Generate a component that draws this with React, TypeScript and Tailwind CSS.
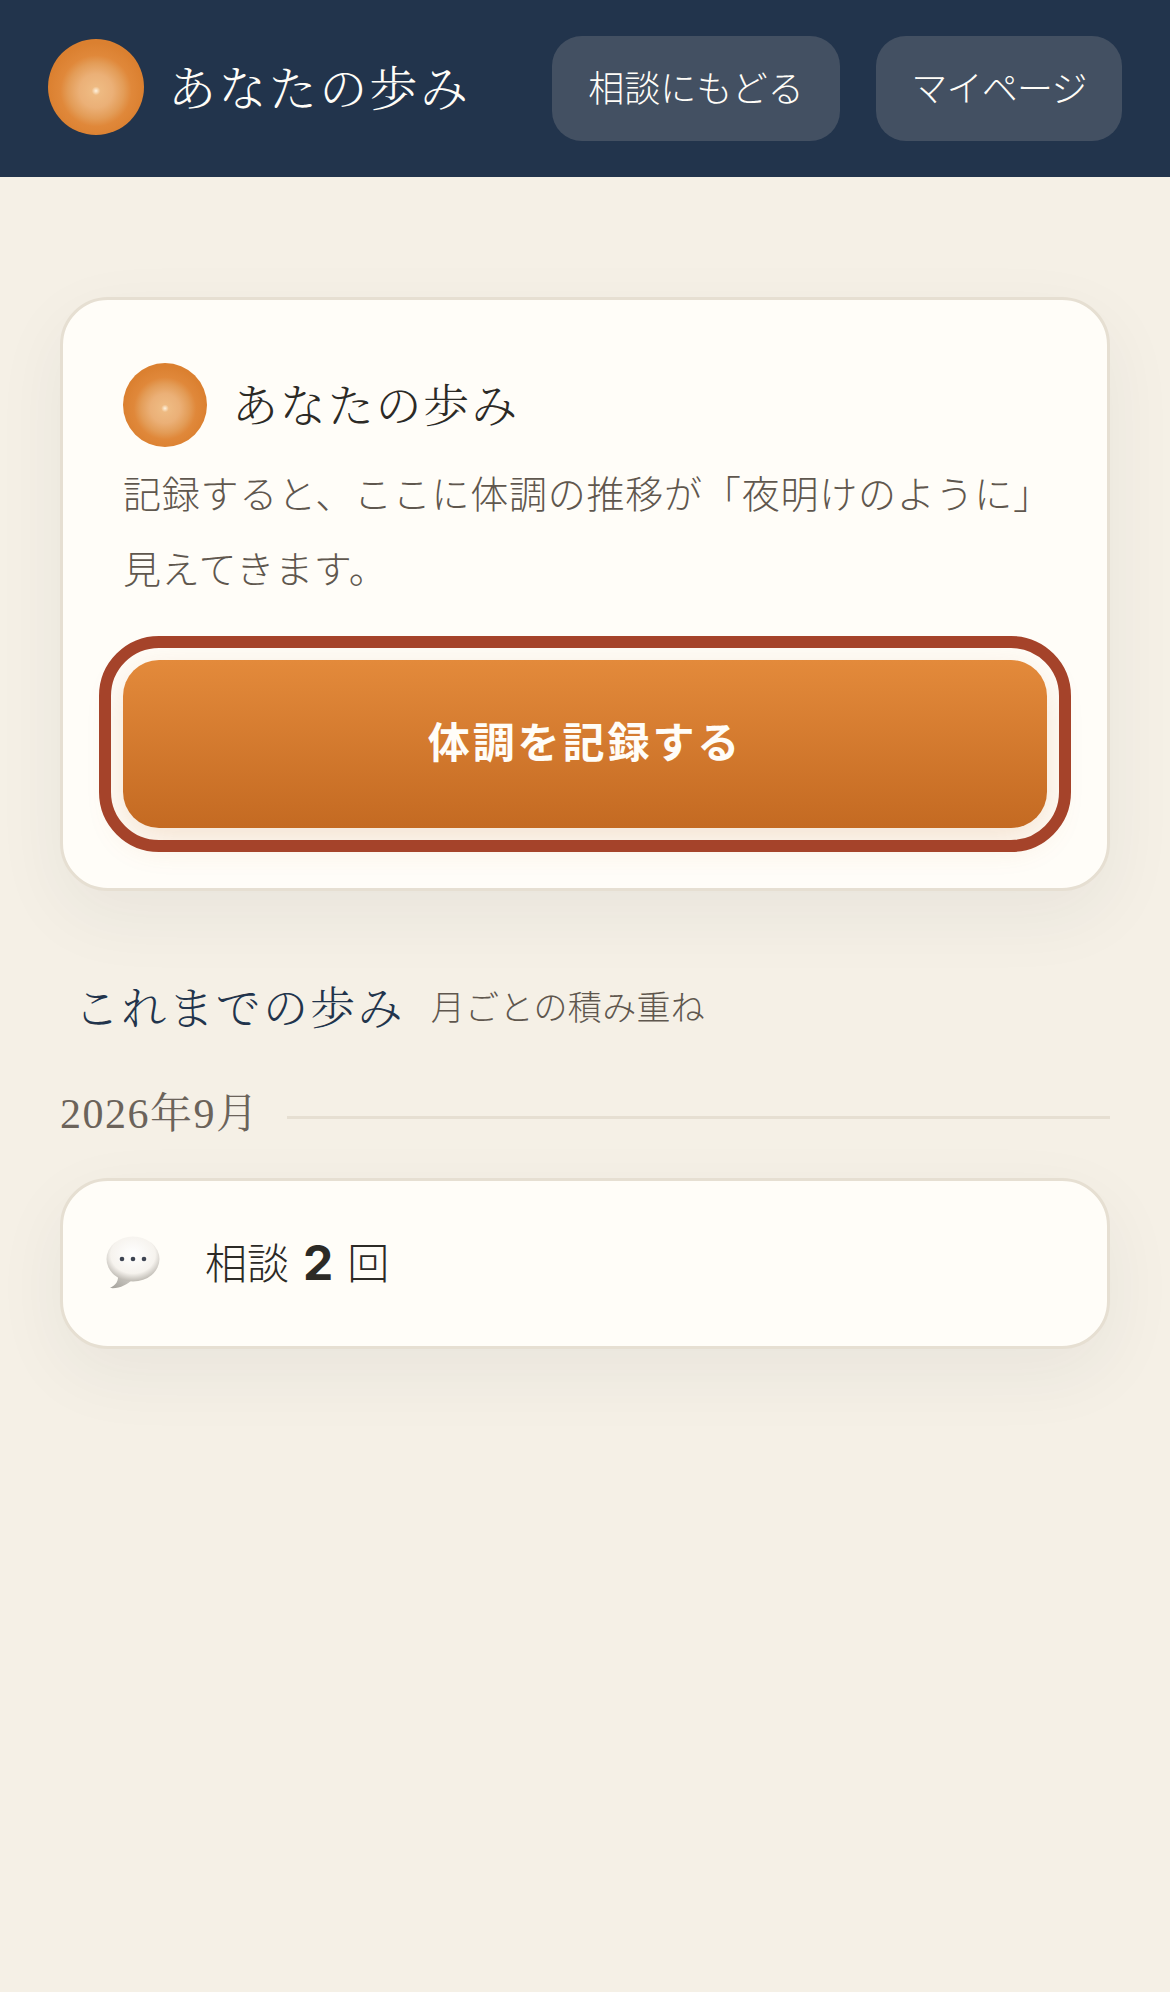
const sans = 'font-["Inter","Liberation_Sans","Noto_Sans_CJK_JP",sans-serif]';

function Sun({ size }: { size: string }) {
  return (
    <div
      className={`${size} shrink-0 rounded-full bg-[radial-gradient(50%_50%_at_50%_54%,#fff3df_0%,#eeba82_9%,#ebb077_35%,#e39c57_58%,#e0883a_74%,#db8030_100%)]`}
    />
  );
}

function BubbleIcon() {
  return (
    <svg width="56" height="56" viewBox="0 0 56 56" className="shrink-0">
      <defs>
        <radialGradient id="bub" cx="50%" cy="40%" r="60%">
          <stop offset="0%" stopColor="#ffffff" />
          <stop offset="70%" stopColor="#f6f3ee" />
          <stop offset="100%" stopColor="#bdb9b2" />
        </radialGradient>
        <linearGradient id="tail" x1="1" y1="0" x2="0" y2="1">
          <stop offset="0%" stopColor="#d8d5cf" />
          <stop offset="100%" stopColor="#a3a09a" />
        </linearGradient>
      </defs>
      <path d="M13 38 C14 46 11 50 5 53 C14 54 22 50 28 44 Z" fill="url(#tail)" />
      <ellipse cx="28" cy="24" rx="26.5" ry="22.5" fill="url(#bub)" />
      <circle cx="17" cy="24" r="2.3" fill="#3d4452" />
      <circle cx="28" cy="24" r="2.3" fill="#3d4452" />
      <circle cx="39" cy="24" r="2.3" fill="#3d4452" />
    </svg>
  );
}

export default function App() {
  return (
    <div className={`min-h-[1992px] bg-[#f5f0e6] ${sans}`}>
      <header className="flex h-[177px] items-center justify-between bg-[#22344c] px-[48px]">
        <div className="mb-[3px] flex items-center gap-[24px]">
          <Sun size="h-[96px] w-[96px]" />
          <span className="mb-[3px] font-['Noto_Serif_CJK_JP','Noto_Sans_CJK_JP',serif] text-[48px] font-light tracking-[0.05em] text-[#fffdf8]">
            あなたの歩み
          </span>
        </div>
        <div className="flex items-center gap-[36px]">
          <button className="flex h-[105px] w-[288px] items-center justify-center rounded-[30px] bg-[#435062] text-[36px] font-light text-[#fffdf8]">
            相談にもどる
          </button>
          <button className="flex h-[105px] w-[246px] items-center justify-center rounded-[30px] bg-[#435062] text-[36px] font-light tracking-[-0.02em] text-[#fffdf8]">
            マイページ
          </button>
        </div>
      </header>

      <main className="px-[60px] pt-[120px]">
        <section className="rounded-[48px] border-[3px] border-[#e6dfd2] bg-[#fffdf8] px-[60px] pb-[60px] pt-[63px] shadow-[0_24px_72px_rgba(34,52,76,0.06)]">
          <div className="flex items-center gap-[25px]">
            <Sun size="h-[84px] w-[84px]" />
            <h2 className="mb-[5px] font-['Noto_Serif_CJK_JP','Noto_Sans_CJK_JP',serif] text-[46px] font-light tracking-[0.04em] text-[#2c2a26]">
              あなたの歩み
            </h2>
          </div>
          <p className="mt-[10px] text-[38px] font-light leading-[75px] tracking-[0.02em] text-[#5f574e]">
            記録すると、ここに体調の推移が「夜明けのように」見えてきます。
          </p>
          <button className="mt-[53px] flex h-[168px] w-full items-center justify-center rounded-[36px] bg-[linear-gradient(180deg,#e38a3b_0%,#c46a22_100%)] pb-[3px] text-[42px] font-bold tracking-[0.07em] text-[#fffdf8] shadow-[0_12px_36px_rgba(196,106,34,0.18)] outline-[12px] outline-offset-[12px] outline-solid outline-[#a5432a]">
            体調を記録する
          </button>
        </section>

        <div className="mt-[81px] flex items-center gap-[26px] pl-[14px]">
          <h2 className="mb-[3px] font-['Noto_Serif_CJK_JP','Noto_Sans_CJK_JP',serif] text-[45px] font-light tracking-[0.05em] text-[#22344c]">
            これまでの歩み
          </h2>
          <span className="text-[34px] font-light tracking-[0.01em] text-[#5f574e]">月ごとの積み重ね</span>
        </div>

        <div className="mt-[40px] flex items-center gap-[27px]">
          <span className="font-['Liberation_Serif','Noto_Serif_CJK_JP','Noto_Sans_CJK_JP',serif] text-[42px] tracking-[1.5px] text-[#6b635a]">2026年9月</span>
          <div className="mt-[6px] h-[3px] flex-1 bg-[#e6dfd2]" />
        </div>

        <section className="mt-[32px] flex h-[171px] items-center gap-[44px] rounded-[48px] border-[3px] border-[#e6dfd2] bg-[#fffdf8] pl-[42px] shadow-[0_24px_72px_rgba(34,52,76,0.06)]">
          <BubbleIcon />
          <p className="flex items-center gap-[14px] text-[42px] font-light text-[#2c2a26]">
            <span>相談</span>
            <span className="text-[48px] font-bold">2</span>
            <span>回</span>
          </p>
        </section>
      </main>
    </div>
  );
}
